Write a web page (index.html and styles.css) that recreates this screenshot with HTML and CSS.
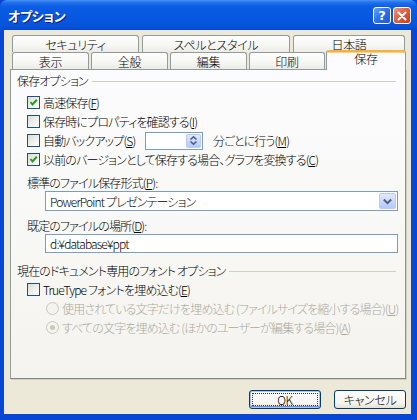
FILE: index.html
```html
<!DOCTYPE html>
<html lang="ja">
<head>
<meta charset="utf-8">
<title>オプション</title>
<link rel="stylesheet" href="styles.css">
</head>
<body>
<div class="window">
  <div class="titlebar">
    <span class="title">オプション</span>
    <div class="tb-buttons">
      <span class="tb-btn help">?</span>
      <span class="tb-btn close"><svg width="10" height="10" viewBox="0 0 10 10"><path d="M1.5 1.5 L8.5 8.5 M8.5 1.5 L1.5 8.5" stroke="#fff" stroke-width="2" stroke-linecap="round"/></svg></span>
    </div>
  </div>
  <div class="frame">
    <div class="tabs">
      <div class="tabrow back">
        <div class="tab t-sec">セキュリティ</div>
        <div class="tab t-spell">スペルとスタイル</div>
        <div class="tab t-jp">日本語</div>
      </div>
      <div class="tabrow front">
        <div class="tab t-view">表示</div>
        <div class="tab t-gen">全般</div>
        <div class="tab t-edit">編集</div>
        <div class="tab t-print">印刷</div>
        <div class="tab selected">保存</div>
      </div>
    </div>
    <div class="panel">
      <div class="group-label"><span>保存オプション</span><i class="rule"></i></div>
      <div class="row first">
        <span class="cb"><svg width="11" height="11" viewBox="0 0 11 11"><path d="M2.5 5 L4.5 7.5 L8.8 2.8" fill="none" stroke="#21A121" stroke-width="2"/></svg></span>
        <span>高速保存(<u>F</u>)</span>
      </div>
      <div class="row">
        <span class="cb"></span>
        <span>保存時にプロパティを確認する(<u>I</u>)</span>
      </div>
      <div class="row">
        <span class="cb"></span>
        <span class="auto-label">自動バックアップ(<u>S</u>)</span>
        <span class="spinner">
          <span class="spin-btn"><svg width="9" height="11" viewBox="0 0 9 11"><path d="M1.5 4.5 L4.5 1.8 L7.5 4.5 M1.5 6.5 L4.5 9.2 L7.5 6.5" fill="none" stroke="#4D6185" stroke-width="1.6"/></svg></span>
        </span>
        <span>分ごとに行う(<u>M</u>)</span>
      </div>
      <div class="row">
        <span class="cb"><svg width="11" height="11" viewBox="0 0 11 11"><path d="M2.5 5 L4.5 7.5 L8.8 2.8" fill="none" stroke="#21A121" stroke-width="2"/></svg></span>
        <span>以前のバージョンとして保存する場合、グラフを変換する(<u>C</u>)</span>
      </div>
      <div class="field-label">標準のファイル保存形式(<u>P</u>):</div>
      <div class="select">
        <span class="select-text">PowerPoint プレゼンテーション</span>
        <span class="drop-btn"><svg width="11" height="9" viewBox="0 0 11 9"><path d="M1.8 2.5 L5.5 6.2 L9.2 2.5" fill="none" stroke="#4D6185" stroke-width="2"/></svg></span>
      </div>
      <div class="field-label second">既定のファイルの場所(<u>D</u>):</div>
      <div class="input">d:¥database¥ppt</div>
      <div class="group-label second"><span>現在のドキュメント専用のフォント オプション</span><i class="rule"></i></div>
      <div class="row">
        <span class="cb"></span>
        <span>TrueType フォントを埋め込む(<u>E</u>)</span>
      </div>
      <div class="row radio-row disabled">
        <span class="rb"></span>
        <span>使用されている文字だけを埋め込む (ファイルサイズを縮小する場合)(<u>U</u>)</span>
      </div>
      <div class="row radio-row disabled">
        <span class="rb on"></span>
        <span>すべての文字を埋め込む (ほかのユーザーが編集する場合)(<u>A</u>)</span>
      </div>
    </div>
    <div class="buttons">
      <button class="btn default"><span class="focus">OK</span></button>
      <button class="btn">キャンセル</button>
    </div>
  </div>
</div>
</body>
</html>
```

FILE: styles.css
```css
* { box-sizing: border-box; }

html, body {
  margin: 0;
  padding: 0;
  background: #ECE9D8;
}

body {
  width: 417px;
  height: 420px;
  overflow: hidden;
  font-family: "Noto Sans CJK JP", "Noto Sans", sans-serif;
  font-size: 12px;
  font-weight: 300;
  letter-spacing: -0.85px;
  font-feature-settings: "palt";
  color: #000;
}

.window {
  width: 417px;
  height: 420px;
  display: flex;
  flex-direction: column;
  background: #0846D8;
}

/* title bar */
.titlebar {
  height: 30px;
  flex: none;
  display: flex;
  align-items: center;
  justify-content: space-between;
  padding: 0 6px 0 8px;
  border-radius: 7px 7px 0 0;
  background: linear-gradient(180deg, #4A92F6 0%, #2272EC 8%, #0A5DE4 22%, #0757E0 60%, #0852DA 90%, #0748C8 100%);
}

.title {
  color: #fff;
  font-family: "Noto Sans CJK JP", sans-serif;
  font-weight: bold;
  font-size: 13px;
  letter-spacing: -0.3px;
  text-shadow: 1px 1px 0 #0A1C83;
}

.tb-buttons {
  display: flex;
  gap: 2px;
  margin-top: 1px;
}

.tb-btn {
  width: 18px;
  height: 17px;
  border: 1px solid #fff;
  border-radius: 3px;
  display: flex;
  align-items: center;
  justify-content: center;
  color: #fff;
  font-family: "DejaVu Sans", sans-serif;
  font-weight: bold;
  font-size: 13px;
  letter-spacing: 0;
  line-height: 1;
}

.help {
  background: linear-gradient(135deg, #6FA6FA 0%, #2F72EA 45%, #1B57D6 100%);
}

.close {
  background: linear-gradient(135deg, #F09A7E 0%, #E2603F 45%, #C83C1E 100%);
}

/* frame */
.frame {
  flex: 1;
  display: flex;
  flex-direction: column;
  background: #ECE9D8;
  margin: 0 6px 6px 4px;
  padding-top: 5px;
}

/* tabs */
.tabs {
  height: 34px;
  flex: none;
  padding-left: 8px;
  display: flex;
  flex-direction: column;
}

.tabrow {
  display: flex;
  height: 17px;
}

.tabrow.back { gap: 3px; }
.tabrow.front { gap: 2px; }

.tab {
  height: 17px;
  border: 1px solid #919B9C;
  border-bottom: none;
  border-radius: 3px 3px 0 0;
  background: linear-gradient(180deg, #FFFFFF 0%, #F7F7F4 55%, #ECEBE6 100%);
  display: flex;
  align-items: center;
  justify-content: center;
  line-height: 1;
  padding-top: 1px;
  letter-spacing: -0.3px;
}

.t-sec { width: 127px; }
.t-spell { width: 148px; }
.t-jp { width: 112px; }
.t-view { width: 77px; }
.t-gen { width: 77px; }
.t-edit { width: 77px; }
.t-print { width: 76px; }

.tab.selected {
  width: 80px;
  height: 20px;
  margin-top: -2px;
  margin-left: -1px;
  position: relative;
  z-index: 2;
  background: #FCFCFE;
  border-top: 2px solid #F4B040;
  box-shadow: inset 0 1px 0 #FFD27A;
  align-items: flex-start;
  padding-top: 1px;
}

/* panel */
.panel {
  height: 310px;
  flex: none;
  margin-left: 6px;
  width: 396px;
  border: 1px solid #919B9C;
  border-right-color: #8A9293;
  border-bottom-color: #7F8788;
  box-shadow: 1px 1px 0 #D0CEBF;
  background: linear-gradient(180deg, #FCFCFE 0%, #F8F8F6 50%, #F4F3EE 100%);
  display: flex;
  flex-direction: column;
  padding-top: 1px;
}

.group-label {
  height: 19px;
  display: flex;
  align-items: center;
  gap: 4px;
  margin: 0 9px 0 6px;
}

.group-label.second { margin-top: 8px; }

.rule {
  flex: 1;
  height: 1px;
  background: #D0D0BF;
  margin-top: 1px;
}

.row {
  height: 19px;
  display: flex;
  align-items: center;
  padding-left: 16px;
  white-space: nowrap;
}

.row.first { margin-top: 3px; }

.cb {
  width: 13px;
  height: 13px;
  flex: none;
  border: 1px solid #1C5180;
  background: linear-gradient(135deg, #DCDCD7 0%, #F0F0EC 55%, #FFFFFF 100%);
  margin-right: 3px;
  display: flex;
  align-items: center;
  justify-content: center;
}

.auto-label { width: 102px; }

.spinner {
  width: 58px;
  height: 18px;
  border: 1px solid #7F9DB9;
  background: #fff;
  display: flex;
  justify-content: flex-end;
  padding: 1px;
  margin-right: 10px;
}

.spin-btn {
  width: 15px;
  height: 100%;
  border: 1px solid #B9CCF5;
  border-radius: 2px;
  background: linear-gradient(180deg, #E1EAFE 0%, #C8D7FA 55%, #B5C9F6 100%);
  display: flex;
  align-items: center;
  justify-content: center;
}

.field-label {
  height: 18px;
  display: flex;
  align-items: center;
  padding-left: 16px;
  margin-top: 4px;
}

.field-label.second { margin-top: 5px; }

.select {
  margin-left: 34px;
  width: 353px;
  height: 20px;
  border: 1px solid #7F9DB9;
  background: #fff;
  display: flex;
  align-items: center;
  justify-content: space-between;
  padding: 1px;
}

.select-text { padding-left: 3px; }

.drop-btn {
  width: 17px;
  height: 16px;
  border: 1px solid #B9CCF5;
  border-radius: 2px;
  background: linear-gradient(180deg, #E1EAFE 0%, #C8D7FA 55%, #B5C9F6 100%);
  display: flex;
  align-items: center;
  justify-content: center;
}

.input {
  margin-left: 34px;
  width: 353px;
  height: 19px;
  border: 1px solid #7F9DB9;
  background: #fff;
  display: flex;
  align-items: center;
  padding-left: 4px;
}

.radio-row { padding-left: 35px; }

.disabled { color: #ACA899; }

.rb {
  width: 13px;
  height: 13px;
  flex: none;
  border-radius: 50%;
  border: 1px solid #CAC8BB;
  background: #F4F3EE;
  margin-right: 3px;
  display: flex;
  align-items: center;
  justify-content: center;
}

.rb.on::after {
  content: "";
  width: 5px;
  height: 5px;
  border-radius: 50%;
  background: #CAC8BB;
}

/* buttons */
.buttons {
  display: flex;
  justify-content: flex-end;
  gap: 13px;
  margin-top: 11px;
  padding-right: 5px;
}

.btn {
  width: 72px;
  height: 19px;
  border: 1px solid #003C74;
  border-radius: 3px;
  background: linear-gradient(180deg, #FFFFFF 0%, #F5F4EF 70%, #E3E0D6 100%);
  font: inherit;
  font-feature-settings: "palt";
  letter-spacing: -0.3px;
  color: #000;
  padding: 0;
  display: flex;
  align-items: center;
  justify-content: center;
  line-height: 1;
}

.btn.default {
  box-shadow: inset 0 0 0 1px #A9C4F5, inset 0 -1px 0 1px #6D8FE8;
  padding: 2px;
}

.focus {
  flex: 1;
  align-self: stretch;
  display: flex;
  align-items: center;
  justify-content: center;
  border: 1px dotted #333;
}
```
